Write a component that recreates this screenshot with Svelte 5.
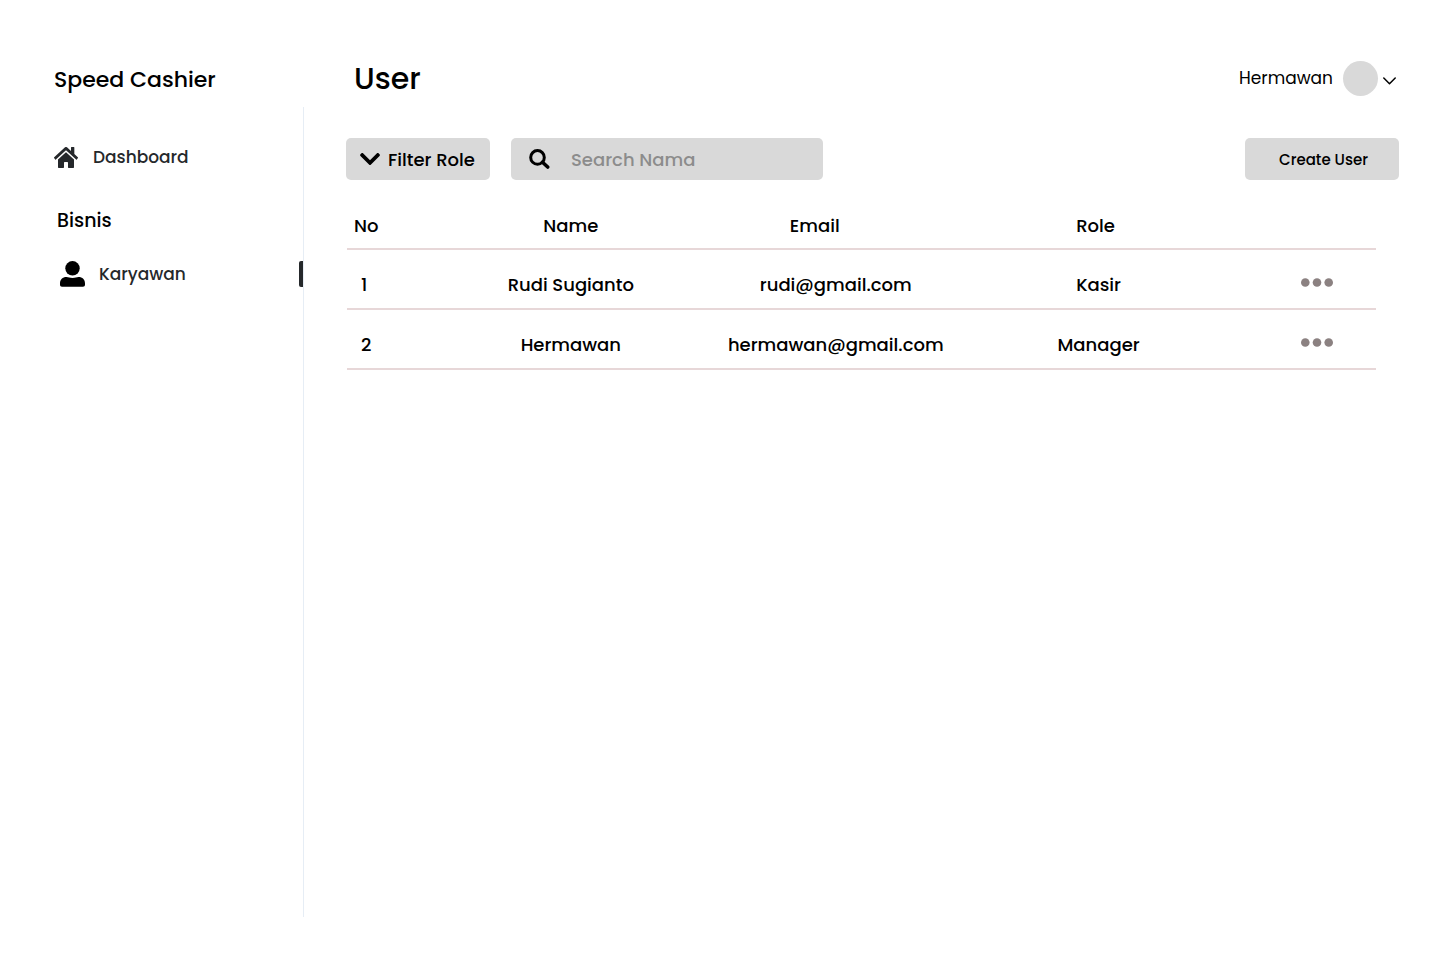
<script>
  const users = [
    { no: 1, name: 'Rudi Sugianto', email: 'rudi@gmail.com', role: 'Kasir' },
    { no: 2, name: 'Hermawan', email: 'hermawan@gmail.com', role: 'Manager' },
  ];
  let query = $state('');
  const shown = $derived(users.filter((u) => u.name.toLowerCase().includes(query.toLowerCase())));
</script>

<div class="app">
  <aside>
    <p class="brand">Speed Cashier</p>
    <nav aria-label="Main">
      <a class="home" href="#dashboard">
        <svg width="24" height="21" viewBox="0 32 576 448" preserveAspectRatio="none" fill="currentColor" aria-hidden="true">
          <path d="M280.370 148.260L96 300.110V464a16 16 0 0 0 16 16l112.060-.29a16 16 0 0 0 15.920-16V368a16 16 0 0 1 16-16h64a16 16 0 0 1 16 16v95.640a16 16 0 0 0 16 16.050L464 480a16 16 0 0 0 16-16V300L295.670 148.260a12.190 12.190 0 0 0-15.300 0zM571.600 251.470L488 182.560V44.050a12 12 0 0 0-12-12h-56a12 12 0 0 0-12 12v72.610L318.470 43a48 48 0 0 0-61 0L4.340 251.470a12 12 0 0 0-1.600 16.900l25.500 31A12 12 0 0 0 45.150 301l235.220-193.740a12.190 12.190 0 0 1 15.300 0L530.900 301a12 12 0 0 0 16.900-1.600l25.500-31a12 12 0 0 0-1.700-16.930z" />
        </svg>
        <span>Dashboard</span>
      </a>
      <h2>Bisnis</h2>
      <a class="staff" href="#karyawan" aria-current="page">
        <svg width="25" height="26" viewBox="0 0 25 26" aria-hidden="true">
          <circle cx="12.500" cy="7.300" r="7.200" fill="#000" />
          <path d="M0 22.500C0 18.500 2.500 16 6.500 16c2 0 3 1 6 1s4-1 6-1c4 0 6.500 2.500 6.500 6.500v1.200c0 1.300-.8 2-2 2H2c-1.200 0-2-.7-2-2z" fill="#000" />
        </svg>
        <span>Karyawan</span>
      </a>
    </nav>
  </aside>

  <main>
    <header>
      <h1>User</h1>
      <button class="account" type="button">
        <span>Hermawan</span>
        <span class="avatar"></span>
        <svg width="13" height="8" viewBox="0 0 13 8" aria-hidden="true">
          <path d="M.8 1 6.500 6.700 12.200 1" fill="none" stroke="#000" stroke-width="1.500" stroke-linecap="round" stroke-linejoin="round" />
        </svg>
      </button>
    </header>

    <div class="toolbar">
      <button class="filter" type="button">
        <svg width="20" height="12" viewBox="5 123 438 266" aria-hidden="true">
          <path d="M207.029 381.476L12.686 187.132c-9.373-9.373-9.373-24.569 0-33.941l22.667-22.667c9.357-9.357 24.522-9.375 33.901-.04L224 284.505l154.745-154.021c9.379-9.335 24.544-9.317 33.901.04l22.667 22.667c9.373 9.373 9.373 24.569 0 33.941L240.971 381.476c-9.373 9.372-24.569 9.372-33.942 0z" />
        </svg>
        Filter Role
      </button>
      <label class="search">
        <svg width="21" height="20" viewBox="0 0 21 20" aria-hidden="true">
          <circle cx="8.500" cy="8.400" r="6.800" fill="none" stroke="#000" stroke-width="3" />
          <path d="M13.500 13.200 18.700 18" stroke="#000" stroke-width="3.600" stroke-linecap="round" />
        </svg>
        <input type="search" placeholder="Search Nama" aria-label="Search Nama" bind:value={query} />
      </label>
      <button class="create" type="button">Create User</button>
    </div>

    <div class="list">
      <table>
        <colgroup>
          <col class="c-no" /><col class="c-name" /><col class="c-email" /><col class="c-role" /><col />
        </colgroup>
        <thead>
          <tr>
            <th class="no" scope="col">No</th>
            <th scope="col">Name</th>
            <th class="email" scope="col">Email</th>
            <th scope="col">Role</th>
            <td></td>
          </tr>
        </thead>
        <tbody>
          {#each shown as user (user.no)}
            <tr>
              <td class="no">{user.no}</td>
              <td>{user.name}</td>
              <td>{user.email}</td>
              <td class="role">{user.role}</td>
              <td class="actions">
                <button type="button" aria-label="Actions for {user.name}">
                  <svg width="32" height="9" viewBox="0 0 32 9" fill="#8b8181" aria-hidden="true">
                    <circle cx="4.300" cy="4.500" r="4.300" />
                    <circle cx="16" cy="4.500" r="4.300" />
                    <circle cx="27.700" cy="4.500" r="4.300" />
                  </svg>
                </button>
              </td>
            </tr>
          {/each}
        </tbody>
      </table>
    </div>
  </main>
</div>

<style>
  :global(body) {
    margin: 0;
    background: #fff;
  }
  .app {
    display: grid;
    grid-template-columns: 304px 1fr;
    min-height: 100vh;
    box-sizing: border-box;
    padding: 56px 0 43px;
    font: 500 18px/27px Poppins, Inter, sans-serif;
    color: #000;
  }
  button,
  input {
    font: inherit;
    color: inherit;
    border: 0;
    margin: 0;
    padding: 0;
    background: none;
  }
  button {
    cursor: pointer;
  }
  svg {
    display: block;
    flex: none;
  }
  aside {
    display: flex;
    flex-direction: column;
  }
  .brand {
    margin: 0;
    padding: 8px 0 11px 54px;
    font-size: 22px;
    line-height: 32px;
  }
  nav {
    flex: 1;
    padding-top: 37px;
    border-right: 1px solid #e6edf5;
  }
  nav a {
    display: flex;
    align-items: center;
    color: #25282b;
    font-size: 17px;
    line-height: 26px;
    text-decoration: none;
  }
  .home {
    gap: 15px;
    padding-left: 54px;
  }
  h2 {
    margin: 37px 0 26px;
    padding-left: 57px;
    font-size: 19px;
    font-weight: 500;
    line-height: 28px;
  }
  .staff {
    gap: 14px;
    padding-left: 60px;
  }
  .staff::after {
    content: '';
    width: 4px;
    height: 26px;
    margin-left: auto;
    border-radius: 2px 0 0 2px;
    background: #25282b;
  }
  main {
    padding: 0 41px 0 42px;
  }
  header {
    display: flex;
    align-items: center;
    justify-content: space-between;
    height: 45px;
    padding: 0 3px 0 8px;
  }
  h1 {
    margin: 0;
    font-size: 30px;
    font-weight: 500;
    line-height: 45px;
  }
  .account {
    display: flex;
    align-items: center;
    font-size: 17px;
    font-weight: 400;
  }
  .account svg {
    margin-top: 4px;
  }
  .avatar {
    width: 35px;
    height: 35px;
    margin: 0 5px 0 10px;
    border-radius: 50%;
    background: #d9d9d9;
  }
  .toolbar {
    display: flex;
    align-items: center;
    gap: 21px;
    margin-top: 37px;
  }
  .filter,
  .search,
  .create {
    display: flex;
    align-items: center;
    box-sizing: border-box;
    height: 42px;
    border-radius: 5px;
    background: #d9d9d9;
  }
  .filter {
    width: 144px;
    gap: 8px;
    padding-left: 14px;
    white-space: nowrap;
  }
  .search {
    width: 312px;
    gap: 21px;
    padding: 0 18px;
  }
  .search input {
    flex: 1;
    min-width: 0;
    outline: none;
    appearance: none;
  }
  .search input::placeholder {
    color: #8c8c8c;
    opacity: 1;
  }
  .create {
    justify-content: center;
    width: 154px;
    margin-left: auto;
    padding-left: 3px;
    font-size: 15px;
  }
  .list {
    margin: 32px 23px 0 1px;
  }
  table {
    width: 100%;
    table-layout: fixed;
    border-collapse: separate;
    border-spacing: 0;
    text-align: center;
  }
  .c-no {
    width: 9%;
  }
  .c-name {
    width: 25.5%;
  }
  .c-email {
    width: 26%;
  }
  .c-role {
    width: 24.5%;
  }
  th,
  td {
    padding: 21px 0 10px;
    border-bottom: 2px solid #e7d7d8;
    font-weight: 500;
  }
  thead th,
  thead td {
    padding: 0 0 9px;
  }
  .no {
    padding-left: 14px;
    text-align: left;
  }
  thead .no {
    padding-left: 7px;
  }
  thead .email {
    padding-right: 42px;
  }
  .role {
    padding-left: 6px;
  }
  .actions {
    padding: 16px 0 12px 36px;
  }
  .actions button {
    display: inline-block;
    vertical-align: middle;
  }
</style>
